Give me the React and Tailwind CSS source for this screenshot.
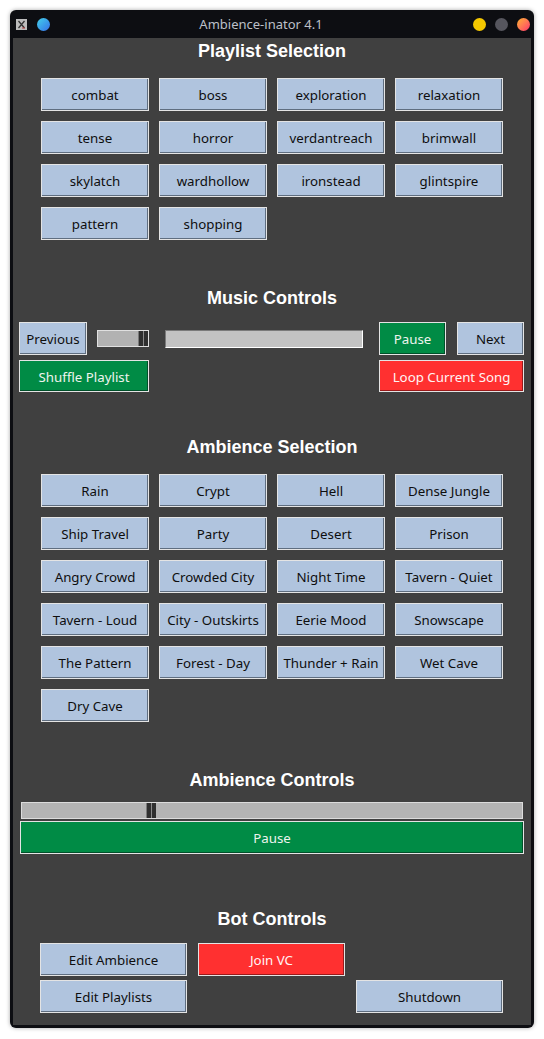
import React from 'react'

const PLAYLISTS = [
  'combat', 'boss', 'exploration', 'relaxation',
  'tense', 'horror', 'verdantreach', 'brimwall',
  'skylatch', 'wardhollow', 'ironstead', 'glintspire',
  'pattern', 'shopping',
]

const AMBIENCES = [
  'Rain', 'Crypt', 'Hell', 'Dense Jungle',
  'Ship Travel', 'Party', 'Desert', 'Prison',
  'Angry Crowd', 'Crowded City', 'Night Time', 'Tavern - Quiet',
  'Tavern - Loud', 'City - Outskirts', 'Eerie Mood', 'Snowscape',
  'The Pattern', 'Forest - Day', 'Thunder + Rain', 'Wet Cave',
  'Dry Cave',
]

const TONES = {
  blue: 'bg-[#b0c4de] text-[#0e0e0e] shadow-[inset_-1px_-1px_0_#5f6e80]',
  green: 'bg-[#008b45] text-[#eef4ee] shadow-[inset_-1px_-1px_0_#00502a]',
  red: 'bg-[#ff3030] text-[#fff4f4] shadow-[inset_-1px_-1px_0_#9a1a1a]',
}

function Btn({ children, tone = 'blue', className = '' }) {
  return (
    <div
      className={`flex items-center justify-center pt-[3px] border border-[#e4e4e4] text-[13.3px] leading-none whitespace-nowrap font-['Noto_Sans',sans-serif] ${TONES[tone]} ${className}`}
    >
      {children}
    </div>
  )
}

function Heading({ children, className = '' }) {
  return (
    <div className={`h-[24px] pt-[2px] flex items-center justify-center text-white font-bold text-[18px] font-['Liberation_Sans',Arial,sans-serif] ${className}`}>
      {children}
    </div>
  )
}

function Grid({ items }) {
  return (
    <div className="ml-[28px] grid grid-cols-[repeat(4,108px)] auto-rows-[33px] gap-x-[10px] gap-y-[10px]">
      {items.map((name) => (
        <Btn key={name}>{name}</Btn>
      ))}
    </div>
  )
}

function Thumb() {
  return (
    <div className="h-full w-[10px] bg-[#2f2f2f] border-l border-[#7a7a7a] flex justify-center">
      <div className="w-px h-full bg-[#8a8a8a]" />
    </div>
  )
}

export default function App() {
  return (
    <div className="w-[544px] h-[1039px] bg-white pt-[10px] px-[10px] pb-[11px]">
      <div className="h-[1018px] rounded-[6px] bg-[#0d0e12] flex flex-col shadow-[0_0_4px_rgba(0,0,0,0.35)]">
        {/* title bar */}
        <div className="h-[28px] shrink-0 flex items-center pl-[6px] pr-[4px] relative">
          <svg width="11" height="11" viewBox="0 0 11 11">
            <rect x="0" y="0" width="11" height="11" fill="#bcbcbc" />
            <path d="M2.5 2 L8.5 9 M8.5 2 L2.5 9" stroke="#333" strokeWidth="1.3" />
            <path d="M6 9 L9 9" stroke="#c04040" strokeWidth="1" />
          </svg>
          <div className="ml-[10px] w-[13px] h-[13px] rounded-full bg-gradient-to-br from-[#45d0e8] to-[#3a6ee8]" />
          <div className="absolute left-0 w-[502px] top-0 h-[28px] pt-[1px] flex items-center justify-center text-[13px] text-[#bcc0c8] font-['Noto_Sans',sans-serif] pointer-events-none">
            Ambience-inator 4.1
          </div>
          <div className="ml-auto flex items-center gap-[9px]">
            <div className="w-[13px] h-[13px] rounded-full bg-[#f5c800]" />
            <div className="w-[13px] h-[13px] rounded-full bg-[#56565e]" />
            <div className="w-[13px] h-[13px] rounded-full bg-gradient-to-br from-[#ffb020] to-[#ff2068]" />
          </div>
        </div>

        {/* content */}
        <div className="flex-1 mx-[3px] mb-[3px] bg-[#404040] flex flex-col">
          <Heading>Playlist Selection</Heading>
          <div className="mt-[16px]">
            <Grid items={PLAYLISTS} />
          </div>

          <Heading className="mt-[45px]">Music Controls</Heading>
          <div className="mt-[13px] ml-[6px] flex items-start h-[33px]">
            <Btn className="w-[68px] h-[33px]">Previous</Btn>
            <div className="ml-[10px] mt-[8px] w-[52px] h-[17px] bg-[#b2b2b2] border border-[#e0e0e0] flex justify-end">
              <Thumb />
            </div>
            <div className="ml-[16px] mt-[8px] w-[198px] h-[18px] bg-[#c2c2c2] border border-t-[#7a7a7a] border-l-[#7a7a7a] border-b-white border-r-white" />
            <Btn tone="green" className="ml-[16px] w-[67px] h-[33px]">Pause</Btn>
            <Btn className="ml-[11px] w-[67px] h-[33px]">Next</Btn>
          </div>
          <div className="mt-[5px] ml-[6px] w-[505px] flex justify-between">
            <Btn tone="green" className="w-[130px] h-[32px]">Shuffle Playlist</Btn>
            <Btn tone="red" className="w-[145px] h-[32px]">Loop Current Song</Btn>
          </div>

          <Heading className="mt-[42px]">Ambience Selection</Heading>
          <div className="mt-[16px]">
            <Grid items={AMBIENCES} />
          </div>

          <Heading className="mt-[45px]">Ambience Controls</Heading>
          <div className="mt-[11px] ml-[8px] w-[502px] h-[17px] bg-[#b4b4b4] border border-[#dcdcdc] flex">
            <div className="w-[124px]" />
            <Thumb />
          </div>
          <Btn tone="green" className="mt-[2px] ml-[7px] w-[504px] h-[33px]">Pause</Btn>

          <Heading className="mt-[52px]">Bot Controls</Heading>
          <div className="mt-[13px] ml-[27px] flex gap-[11px]">
            <Btn className="w-[147px] h-[33px]">Edit Ambience</Btn>
            <Btn tone="red" className="w-[147px] h-[33px]">Join VC</Btn>
          </div>
          <div className="mt-[4px] ml-[27px] w-[463px] flex justify-between">
            <Btn className="w-[147px] h-[33px]">Edit Playlists</Btn>
            <Btn className="w-[147px] h-[33px]">Shutdown</Btn>
          </div>
        </div>
      </div>
    </div>
  )
}
